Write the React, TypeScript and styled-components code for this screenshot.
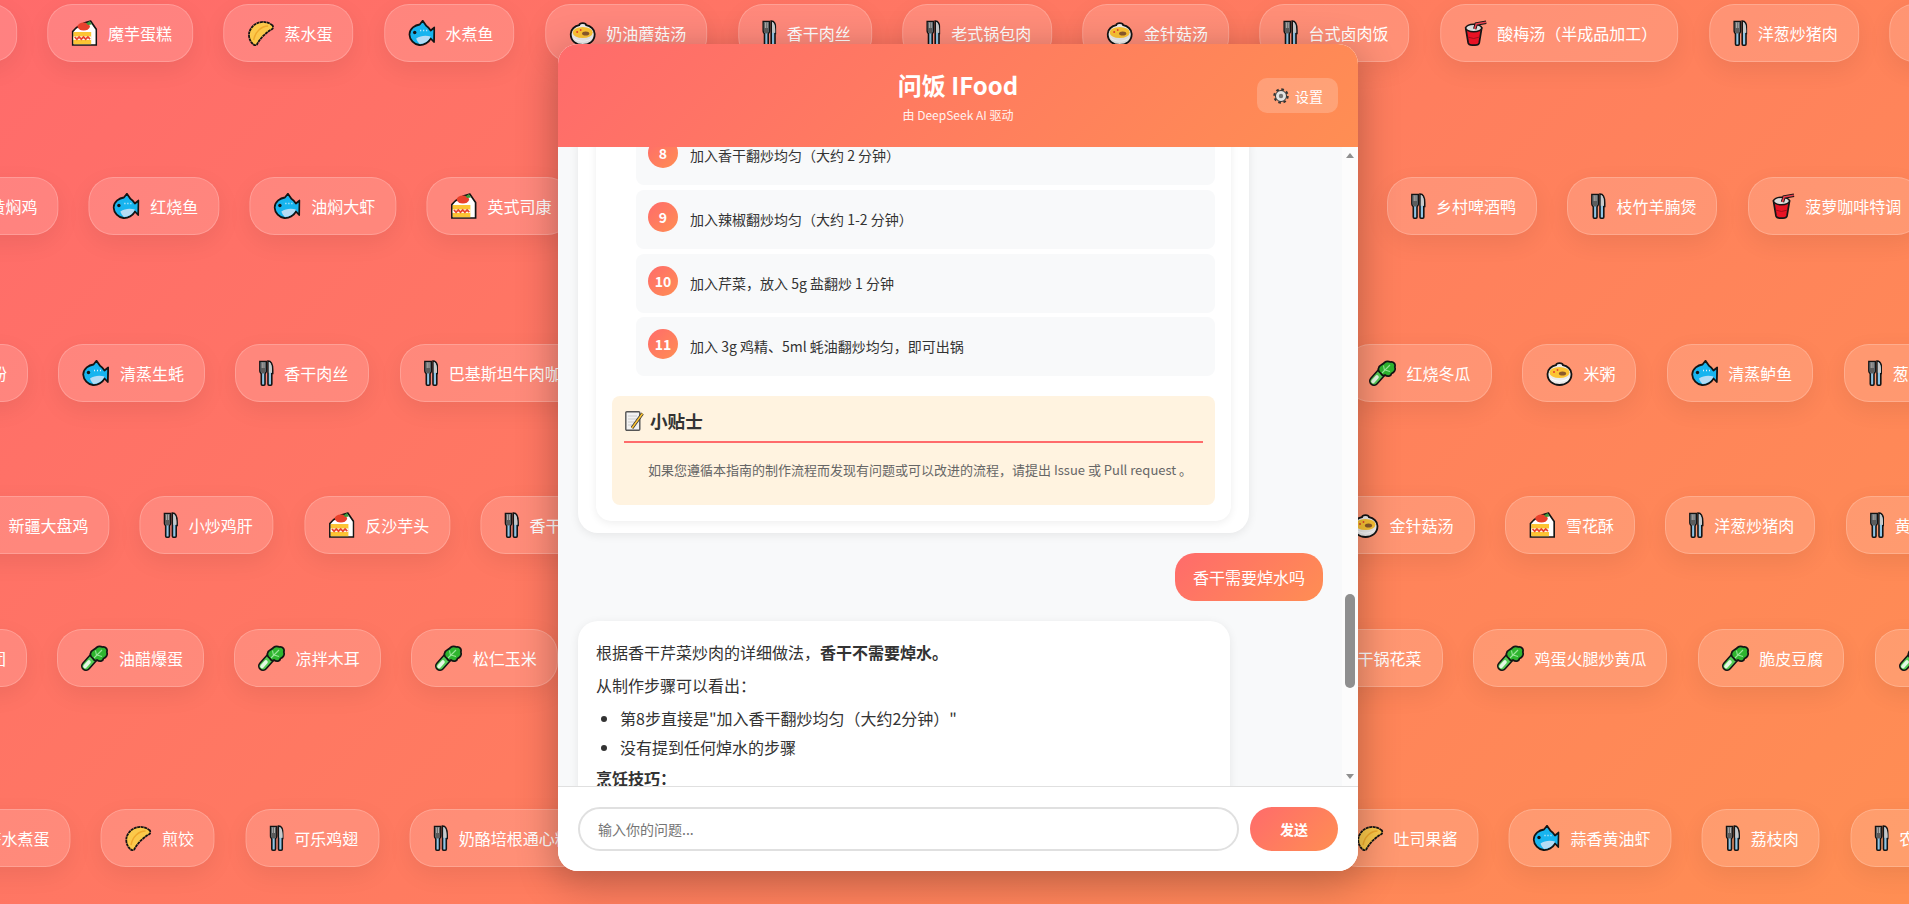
import React from 'react';
import styled, { createGlobalStyle } from 'styled-components';

const GlobalStyle = createGlobalStyle`
  * { box-sizing: border-box; }
  html, body { margin: 0; padding: 0; height: 100%; }
  body {
    font-family: "Noto Sans CJK SC", "Noto Sans", "Liberation Sans", sans-serif;
    color: #333;
  }
`;

const gradient = 'linear-gradient(135deg, #ff6b6b 0%, #ff8e53 100%)';

const Page = styled.div`
  position: relative;
  width: 100%;
  height: 100vh;
  overflow: hidden;
  background: ${gradient};
`;

const FoodLayer = styled.div`
  position: absolute;
  inset: 0;
  overflow: hidden;
`;

const FoodRow = styled.div<{ $gap: number }>`
  display: grid;
  grid-template-columns: 1300px 1fr;
  height: 58px;
  margin-top: ${(p) => p.$gap}px;
`;

const Track = styled.div<{ $x: number }>`
  display: flex;
  gap: 30.4px;
  width: max-content;
  justify-self: start;
  transform: translateX(${(p) => p.$x}px);
`;

const Pill = styled.div`
  display: flex;
  flex: none;
  align-items: center;
  gap: 10.5px;
  height: 58px;
  padding: 0 20px 0 23px;
  border: 1px solid rgba(255, 255, 255, 0.2);
  border-radius: 25px;
  background: rgba(255, 255, 255, 0.15);
  box-shadow: 0 8px 24px rgba(0, 0, 0, 0.07);
  color: #fff;
  font-size: 16px;
  font-weight: 400;
  line-height: 24px;
  white-space: nowrap;
`;

const Chat = styled.main`
  position: relative;
  display: flex;
  flex-direction: column;
  width: 800px;
  height: 827px;
  margin: 44px 0 0 558px;
  border-radius: 20px;
  overflow: hidden;
  background: #fff;
`;

const ChatShadow = styled.div`
  position: absolute;
  top: 44px;
  left: 558px;
  width: 800px;
  height: 827px;
  border-radius: 20px;
  box-shadow: 0 10px 40px rgba(0, 0, 0, 0.3);
`;

const Header = styled.header`
  flex: none;
  display: grid;
  grid-template-columns: 1fr auto 1fr;
  align-items: center;
  height: 103px;
  padding: 0 20px;
  background: ${gradient};
  color: #fff;
`;

const Brand = styled.div`
  grid-column: 2;
  text-align: center;
`;

const Title = styled.h1`
  margin: 0;
  font-size: 24px;
  font-weight: 700;
  line-height: 32px;
`;

const Subtitle = styled.p`
  margin: 6px 0 0;
  font-size: 12px;
  line-height: 16px;
  opacity: 0.9;
`;

const SettingsButton = styled.button`
  justify-self: end;
  display: flex;
  align-items: center;
  gap: 6px;
  height: 35px;
  width: 81px;
  padding: 0 0 0 16px;
  border: 0;
  border-radius: 10px;
  background: rgba(255, 255, 255, 0.2);
  color: #fff;
  font: inherit;
  font-size: 14px;
`;

const Body = styled.div`
  flex: 1;
  min-height: 0;
  display: flex;
  background: #f8f9fa;
`;

const Messages = styled.div`
  flex: 1;
  min-width: 0;
  overflow: hidden;
`;

const MessageStack = styled.div`
  display: flex;
  flex-direction: column;
  gap: 20px;
  margin-top: -20.7px;
  padding: 0 19px 0 20px;
`;

const ScrollTrack = styled.div`
  flex: none;
  width: 16px;
  display: flex;
  flex-direction: column;
  align-items: center;
  background: #fcfcfc;
`;

const ArrowUp = styled.div`
  margin-top: 6px;
  border-left: 4.5px solid transparent;
  border-right: 4.5px solid transparent;
  border-bottom: 5px solid #8f8f8f;
`;

const ArrowDown = styled.div`
  margin-top: auto;
  margin-bottom: 7px;
  border-left: 4.5px solid transparent;
  border-right: 4.5px solid transparent;
  border-top: 5px solid #8f8f8f;
`;

const Thumb = styled.div`
  width: 10px;
  height: 94px;
  margin-top: 436px;
  border-radius: 5px;
  background: #8f8f8f;
`;

const BotBubble = styled.div<{ $width: number }>`
  flex: none;
  width: ${(p) => p.$width}px;
  border-radius: 20px;
  background: #fff;
  box-shadow: 0 2px 10px rgba(0, 0, 0, 0.08);
`;

const AnswerBubble = styled(BotBubble)`
  padding: 0 18px 12px;
`;

const TextBubble = styled(BotBubble)`
  padding: 19px 18px 24px;
  font-size: 16px;
  line-height: 25.6px;
`;

const RecipeCard = styled.div`
  padding: 0 16px 16px;
  border-radius: 15px;
  background: #fff;
  box-shadow: 0 2px 8px rgba(0, 0, 0, 0.07);
`;

const StepList = styled.ol`
  display: flex;
  flex-direction: column;
  gap: 4.7px;
  margin: 0 0 20px 24px;
  padding: 0;
  list-style: none;
`;

const Step = styled.li`
  display: flex;
  gap: 12px;
  height: 59px;
  padding: 12px;
  border-radius: 8px;
  background: #f8f9fa;
`;

const StepNumber = styled.span`
  flex: none;
  display: flex;
  align-items: center;
  justify-content: center;
  width: 30px;
  height: 30px;
  border-radius: 50%;
  background: ${gradient};
  color: #fff;
  font-size: 14px;
  font-weight: 700;
`;

const StepText = styled.span`
  padding-top: 5px;
  font-size: 14px;
  line-height: 24px;
`;

const TipBox = styled.section`
  height: 109px;
  padding: 15px 12px;
  border-radius: 8px;
  background: #fff3e0;
`;

const TipTitle = styled.h3`
  display: flex;
  align-items: center;
  gap: 5px;
  height: 32px;
  margin: 0;
  padding: 0 0 10px 1px;
  border-bottom: 2px solid #ff6b6b;
  font-size: 17.6px;
  font-weight: 700;
  line-height: 20px;
`;

const TipText = styled.p`
  margin: 17px 0 0;
  padding-left: 24px;
  color: #666;
  font-size: 13px;
  line-height: 20px;
  white-space: nowrap;
`;

const UserBubble = styled.div`
  align-self: flex-end;
  height: 48px;
  padding: 12px 18px;
  border-radius: 20px;
  background: ${gradient};
  color: #fff;
  font-size: 16px;
  line-height: 24px;
`;

const Para = styled.p`
  margin: 0 0 7px;
`;

const Bullets = styled.ul`
  margin: 0 0 6px;
  padding-left: 24px;
`;

const Bullet = styled.li`
  margin-bottom: 3.4px;
`;

const TipHeading = styled.h4`
  margin: 0;
  font-size: 16px;
  font-weight: 700;
  line-height: 25.6px;
`;

const InputBar = styled.form`
  flex: none;
  display: flex;
  gap: 11px;
  height: 85px;
  padding: 20px;
  border-top: 1px solid #e0e0e0;
  background: #fff;
`;

const QuestionInput = styled.input`
  flex: 1;
  min-width: 0;
  height: 44px;
  padding: 0 18px;
  border: 2px solid #e0e0e0;
  border-radius: 22px;
  background: #fff;
  font: inherit;
  font-size: 14px;
  outline: none;
  &::placeholder { color: #757575; }
`;

const SendButton = styled.button`
  flex: none;
  width: 88px;
  height: 44px;
  border: 0;
  border-radius: 22px;
  background: ${gradient};
  color: #fff;
  font: inherit;
  font-size: 14px;
  font-weight: 700;
`;

const ink = '#141414';

function Cake() {
  return (
    <svg width="26.5" height="26" viewBox="0 0 26.5 26">
      <path d="M1.5 11.5C5 7 12 3 19.5 1.2L25.2 9.5V25H1.5Z" fill="#fff" stroke={ink} strokeWidth="1.7" />
      <rect x="2.3" y="12" width="17.7" height="12.2" fill="#fcc434" />
      <rect x="2.3" y="16.5" width="17.7" height="3.4" fill="#fff" />
      <path d="M3.5 17l2.2 2.2 2.2-2.2 2.2 2.2 2.2-2.2 2.2 2.2 2.2-2.2 2.2 2.2" fill="none" stroke="#e8412c" strokeWidth="1.7" />
      <ellipse cx="12.5" cy="6.5" rx="6.2" ry="4" fill="#e8412c" />
      <path d="M15 3.5l3.5-2.5 2 3.5-3.5.5z" fill="#3a9a3a" />
    </svg>
  );
}

function Dumpling() {
  return (
    <svg width="26.5" height="26" viewBox="0 0 26.5 26">
      <path d="M25.4 5.5C19 -.5 6.5 1 2.5 11C.6 16 2.5 22 7 25C8.5 25.6 9.5 25 10 24C13 18 19 12.5 25 9C26 8 26 6.5 25.4 5.5Z" fill="#fcc94a" stroke={ink} strokeWidth="1.8" strokeDasharray="3 .5" />
      <path d="M21 6C14 6 8 12 6.5 20" fill="none" stroke="#f0a92c" strokeWidth="1.5" />
    </svg>
  );
}

function Fish() {
  return (
    <svg width="27" height="26" viewBox="0 0 27 26">
      <path d="M1.2 14.5C1.5 8.5 7 5 11.5 4.5L14.5 .8L18 5.8C20 7 21.5 9 22.5 10.5L26.2 7.5L25.8 22L22.5 18.5C20.5 22.5 15.5 25.4 11 25C6 24.5 1.5 20 1.2 14.5Z" fill="#17b4ef" stroke={ink} strokeWidth="1.8" strokeLinejoin="round" />
      <path d="M8 18.5C12 15.5 18 15 22.5 16.5C21 21 15.5 24 11.5 24C10 22.5 8.5 20.5 8 18.5Z" fill="#b5dcf5" />
      <circle cx="6.5" cy="12.5" r="1.7" fill={ink} />
      <path d="M12 10.5h1m2 0h1m2 0h1" stroke="#dff4ff" strokeWidth="1.3" />
    </svg>
  );
}

function Bowl() {
  return (
    <svg width="27" height="26" viewBox="0 0 27 26">
      <path d="M1.5 14C1.5 9 6 6 10 5.2C10.5 2.5 16.5 2.5 17 5.2C21 6 25.5 9 25.5 14C25.5 21 20 25 13.5 25C7 25 1.5 21 1.5 14Z" fill="#ececec" stroke={ink} strokeWidth="1.8" />
      <ellipse cx="13.5" cy="12.5" rx="10" ry="5.6" fill="#fcc434" />
      <ellipse cx="16.5" cy="13.5" rx="3.6" ry="2" fill="#8a5a2b" />
      <circle cx="8" cy="12" r="1" fill="#e8412c" />
      <circle cx="11.5" cy="10" r=".9" fill="#e8412c" />
      <path d="M4 17C8 22 19 22 23 17C22 23 5 23 4 17Z" fill="#fff" />
    </svg>
  );
}

function Cutlery() {
  return (
    <svg width="14.5" height="26" viewBox="0 0 14.5 26">
      <path d="M.9 1.5H7.3V11C7.3 12.8 6 13 6 14V24Q6 25.2 5 25.2H3.3Q2.3 25.2 2.3 24V14C2.3 13 .9 12.8 .9 11Z" fill="#8fc5e6" stroke={ink} strokeWidth="1.6" />
      <path d="M1.6 2.2H6.6V11C6.6 12.5 5.4 12.6 5.4 13.5H2.9C2.9 12.6 1.6 12.5 1.6 11Z" fill="#5c5c5c" />
      <path d="M3.2 2.5V8M5 2.5V8" stroke="#bbb" strokeWidth=".9" />
      <path d="M9 1C12 1 13.7 5 13.7 10V13.5H12.8V24Q12.8 25.2 11.8 25.2H10Q9 25.2 9 24Z" fill="#8fc5e6" stroke={ink} strokeWidth="1.6" />
      <path d="M9.8 2C11.6 2.5 13 5.5 13 10V12.8H9.8Z" fill="#c9c9c9" />
    </svg>
  );
}

function Cup() {
  return (
    <svg width="23" height="26" viewBox="0 0 23 26">
      <path d="M1.5 8L4 23Q4.5 25.2 9.5 25.2Q14.5 25.2 15 23L17.5 8Z" fill="#e81224" stroke={ink} strokeWidth="1.7" />
      <ellipse cx="9.5" cy="8" rx="8" ry="3.8" fill="#dcdcdc" stroke={ink} strokeWidth="1.5" />
      <path d="M3.5 17Q9.5 20 15.5 17" fill="none" stroke="#a30d1a" strokeWidth="1" />
      <path d="M10.5 9L12 4L22 2.3" fill="none" stroke={ink} strokeWidth="3.4" />
      <path d="M10.5 9L12 4L21.8 2.3" fill="none" stroke="#e8414f" strokeWidth="1.6" />
    </svg>
  );
}

function Greens() {
  return (
    <svg width="27" height="26" viewBox="0 0 27 26">
      <path d="M5 21L13 12" stroke={ink} strokeWidth="10" strokeLinecap="round" />
      <path d="M5 21L13 12" stroke="#55cc55" strokeWidth="6.8" strokeLinecap="round" />
      <path d="M4 21.5L8 17" stroke="#e4f7e4" strokeWidth="3.6" strokeLinecap="round" />
      <path d="M9.5 8.5C10 4.5 14 5 15.5 2.5C18 .5 20.5 1.5 21.5 2C25 1.5 26.8 4.5 25.8 7C27 10 25 12.5 22.5 13.5C22 16.5 18.5 17 16 15C14.5 16 13 15.5 12 13.5C10.5 12.5 9 11 9.5 8.5Z" fill="#2fb52f" stroke={ink} strokeWidth="1.7" />
      <path d="M13 13L21 5M16 10l5 1.5M15.5 10.5l-1-5" fill="none" stroke="#9be59b" strokeWidth="1.1" />
    </svg>
  );
}

function Gear() {
  return (
    <svg width="16" height="16" viewBox="0 0 16 16">
      <circle cx="8" cy="8" r="6.6" fill="none" stroke="#333" strokeWidth="2.2" strokeDasharray="2.6 2.6" />
      <circle cx="8" cy="8" r="5.5" fill="#e4e4e4" stroke="#333" strokeWidth="1" />
      <circle cx="8" cy="8" r="2.2" fill="#777" />
    </svg>
  );
}

function Memo() {
  return (
    <svg width="20" height="20" viewBox="0 0 20 20">
      <rect x=".8" y=".8" width="14" height="18.4" rx="1" fill="#f2f2f2" stroke="#555" strokeWidth="1.4" />
      <path d="M3 5h9M3 8h9M3 11h6M3 14h4" stroke="#ccc" strokeWidth="1" />
      <path d="M7 17L17.5 2.5" stroke="#333" strokeWidth="3" />
      <path d="M7 17L17.5 2.5" stroke="#fcc434" strokeWidth="1.6" />
    </svg>
  );
}

const icons = {
  cake: Cake,
  dumpling: Dumpling,
  fish: Fish,
  bowl: Bowl,
  fork: Cutlery,
  cup: Cup,
  greens: Greens,
};

type IconName = keyof typeof icons;
type Dish = [string, IconName];

type RowData = {
  gap: number;
  left: { x: number; dishes: Dish[] };
  right?: { x: number; dishes: Dish[] };
};

// right tracks are offset from the 1300px column line
const rows: RowData[] = [
  {
    gap: 4,
    left: {
      x: -129.8,
      dishes: [
        ['白灼菜心', 'greens'],
        ['魔芋蛋糕', 'cake'],
        ['蒸水蛋', 'dumpling'],
        ['水煮鱼', 'fish'],
        ['奶油蘑菇汤', 'bowl'],
        ['香干肉丝', 'fork'],
        ['老式锅包肉', 'fork'],
        ['金针菇汤', 'bowl'],
        ['台式卤肉饭', 'fork'],
        ['酸梅汤（半成品加工）', 'cup'],
        ['洋葱炒猪肉', 'fork'],
        ['红烧肉', 'fork'],
      ],
    },
  },
  {
    gap: 115,
    left: {
      x: -59.6,
      dishes: [
        ['黄焖鸡', 'fork'],
        ['红烧鱼', 'fish'],
        ['油焖大虾', 'fish'],
        ['英式司康', 'cake'],
      ],
    },
    right: {
      x: 87,
      dishes: [
        ['乡村啤酒鸭', 'fork'],
        ['枝竹羊腩煲', 'fork'],
        ['菠萝咖啡特调', 'cup'],
      ],
    },
  },
  {
    gap: 109,
    left: {
      x: -90,
      dishes: [
        ['螺蛳粉', 'fork'],
        ['清蒸生蚝', 'fish'],
        ['香干肉丝', 'fork'],
        ['巴基斯坦牛肉咖喱', 'fork'],
      ],
    },
    right: {
      x: 45,
      dishes: [
        ['红烧冬瓜', 'greens'],
        ['米粥', 'bowl'],
        ['清蒸鲈鱼', 'fish'],
        ['葱爆羊肉', 'fork'],
      ],
    },
  },
  {
    gap: 94,
    left: {
      x: -40.6,
      dishes: [
        ['新疆大盘鸡', 'fork'],
        ['小炒鸡肝', 'fork'],
        ['反沙芋头', 'cake'],
        ['香干肉丝', 'fork'],
      ],
    },
    right: {
      x: 28,
      dishes: [
        ['金针菇汤', 'bowl'],
        ['雪花酥', 'cake'],
        ['洋葱炒猪肉', 'fork'],
        ['黄豆焖猪脚', 'fork'],
      ],
    },
  },
  {
    gap: 75,
    left: {
      x: -91,
      dishes: [
        ['糯米团', 'fork'],
        ['油醋爆蛋', 'greens'],
        ['凉拌木耳', 'greens'],
        ['松仁玉米', 'greens'],
      ],
    },
    right: {
      x: -4,
      dishes: [
        ['干锅花菜', 'greens'],
        ['鸡蛋火腿炒黄瓜', 'greens'],
        ['脆皮豆腐', 'greens'],
        ['清炒时蔬', 'greens'],
      ],
    },
  },
  {
    gap: 122,
    left: {
      x: -63.5,
      dishes: [
        ['茶水煮蛋', 'fork'],
        ['煎饺', 'dumpling'],
        ['可乐鸡翅', 'fork'],
        ['奶酪培根通心粉', 'fork'],
      ],
    },
    right: {
      x: 32.5,
      dishes: [
        ['吐司果酱', 'dumpling'],
        ['蒜香黄油虾', 'fish'],
        ['荔枝肉', 'fork'],
        ['农家小炒肉', 'fork'],
      ],
    },
  },
];

const steps = [
  { n: 8, text: '加入香干翻炒均匀（大约 2 分钟）' },
  { n: 9, text: '加入辣椒翻炒均匀（大约 1-2 分钟）' },
  { n: 10, text: '加入芹菜，放入 5g 盐翻炒 1 分钟' },
  { n: 11, text: '加入 3g 鸡精、5ml 蚝油翻炒均匀，即可出锅' },
];

function DishTrack({ x, dishes }: { x: number; dishes: Dish[] }) {
  return (
    <Track $x={x}>
      {dishes.map(([name, icon], i) => {
        const Icon = icons[icon];
        return (
          <Pill key={i}>
            <Icon />
            <span>{name}</span>
          </Pill>
        );
      })}
    </Track>
  );
}

export default function App() {
  return (
    <Page>
      <GlobalStyle />
      <FoodLayer>
        {rows.map((row, i) => (
          <FoodRow key={i} $gap={row.gap}>
            <DishTrack x={row.left.x} dishes={row.left.dishes} />
            {row.right && <DishTrack x={row.right.x} dishes={row.right.dishes} />}
          </FoodRow>
        ))}
      </FoodLayer>
      <ChatShadow />
      <Chat>
        <Header>
          <Brand>
            <Title>问饭 IFood</Title>
            <Subtitle>由 DeepSeek AI 驱动</Subtitle>
          </Brand>
          <SettingsButton type="button">
            <Gear />
            设置
          </SettingsButton>
        </Header>
        <Body>
          <Messages>
            <MessageStack>
              <AnswerBubble $width={671}>
                <RecipeCard>
                  <StepList>
                    {steps.map((step) => (
                      <Step key={step.n}>
                        <StepNumber>{step.n}</StepNumber>
                        <StepText>{step.text}</StepText>
                      </Step>
                    ))}
                  </StepList>
                  <TipBox>
                    <TipTitle>
                      <Memo />
                      小贴士
                    </TipTitle>
                    <TipText>如果您遵循本指南的制作流程而发现有问题或可以改进的流程，请提出 Issue 或 Pull request 。</TipText>
                  </TipBox>
                </RecipeCard>
              </AnswerBubble>
              <UserBubble>香干需要焯水吗</UserBubble>
              <TextBubble $width={652}>
                <Para>
                  根据香干芹菜炒肉的详细做法，<strong>香干不需要焯水。</strong>
                </Para>
                <Para>从制作步骤可以看出：</Para>
                <Bullets>
                  <Bullet>第8步直接是"加入香干翻炒均匀（大约2分钟）"</Bullet>
                  <Bullet>没有提到任何焯水的步骤</Bullet>
                </Bullets>
                <TipHeading>烹饪技巧：</TipHeading>
              </TextBubble>
            </MessageStack>
          </Messages>
          <ScrollTrack>
            <ArrowUp />
            <Thumb />
            <ArrowDown />
          </ScrollTrack>
        </Body>
        <InputBar>
          <QuestionInput placeholder="输入你的问题..." />
          <SendButton type="button">发送</SendButton>
        </InputBar>
      </Chat>
    </Page>
  );
}
